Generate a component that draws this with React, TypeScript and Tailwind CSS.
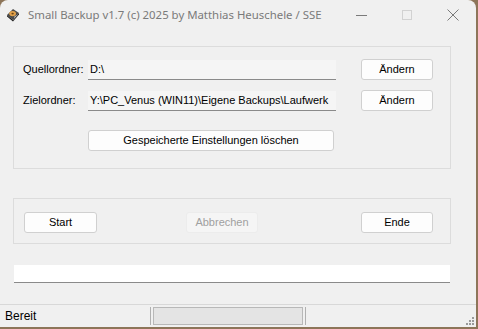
import React from 'react'

const BTN =
  'flex h-[21px] items-center justify-center rounded-[3px] border border-[#d0d0d0] bg-[#fdfdfd] text-[11px] text-black'

function Field({ value }: { value: string }) {
  return (
    <div className="flex h-[20px] w-[248px] items-center overflow-hidden whitespace-nowrap border-b border-[#8a8a8a] bg-[#f5f5f5] pl-[2px] text-[11px] text-black">
      {value}
    </div>
  )
}

function DriveIcon() {
  return (
    <svg width="14" height="14" viewBox="0 0 14 14">
      {/* tilted drive body */}
      <path d="M1 7 L7 1 L13 5 L7 12 Z" fill="#4a4a4a" />
      <path d="M1 7 L7 12 L7 13.5 L1 8.5 Z" fill="#1e1e1e" />
      <path d="M7 12 L13 5 L13 6.5 L7 13.5 Z" fill="#2e2e2e" />
      {/* platter */}
      <ellipse cx="6.6" cy="5.6" rx="3.4" ry="2.6" fill="#e0a04a" />
      <ellipse cx="6.6" cy="5.6" rx="1.2" ry="0.9" fill="#6b4415" />
      <path d="M8 9.5 L10.5 7.5" stroke="#d0d0d0" strokeWidth="1" />
    </svg>
  )
}

export default function App() {
  return (
    <div className="h-[329px] w-[478px] bg-[#8d7559]" style={{ fontFamily: '"Liberation Sans", Arial, sans-serif' }}>
      <div className="flex h-[327px] w-[476px] flex-col overflow-hidden rounded-t-[8px] bg-[#f0f0f0]">
        {/* Title bar */}
        <div className="flex h-[30px] shrink-0 items-center">
          <div className="ml-[6px] mr-[8px] flex h-[14px] w-[14px] items-center justify-center">
            <DriveIcon />
          </div>
          <span className="text-[11.4px] text-[#7a7a7a]" style={{ fontFamily: '"Noto Sans", "Open Sans", sans-serif' }}>
            Small Backup v1.7 (c) 2025 by Matthias Heuschele / SSE
          </span>
          <div className="ml-auto flex items-center">
            <div className="flex w-[46px] justify-center">
              <div className="h-px w-[11px] bg-[#7a7a7a]" />
            </div>
            <div className="flex w-[46px] justify-center">
              <div className="h-[10px] w-[10px] border border-[#d2d2d2]" />
            </div>
            <div className="flex w-[46px] justify-center">
              <svg width="12" height="12" viewBox="0 0 12 12">
                <path d="M0.5 0.5 L11.5 11.5 M11.5 0.5 L0.5 11.5" stroke="#7a7a7a" strokeWidth="1" />
              </svg>
            </div>
          </div>
        </div>

        {/* Folders group */}
        <div className="ml-[13px] mt-[16px] h-[123px] w-[438px] border border-[#dcdcdc] pl-[9px] pt-[12px]">
          <div className="flex h-[21px] items-center">
            <span className="w-[65px] text-[11px] text-black">Quellordner:</span>
            <Field value="D:\" />
            <div className={`${BTN} ml-[25px] w-[72px]`}>Ändern</div>
          </div>
          <div className="mt-[10px] flex h-[21px] items-center">
            <span className="w-[65px] text-[11px] text-black">Zielordner:</span>
            <Field value="Y:\PC_Venus (WIN11)\Eigene Backups\Laufwerk" />
            <div className={`${BTN} ml-[25px] w-[72px]`}>Ändern</div>
          </div>
          <div className={`${BTN} ml-[65px] mt-[19px] w-[246px]`}>Gespeicherte Einstellungen löschen</div>
        </div>

        {/* Actions group */}
        <div className="ml-[13px] mt-[29px] flex h-[46px] w-[438px] items-start border border-[#dcdcdc] pl-[10px] pt-[13px]">
          <div className={`${BTN} w-[73px]`}>Start</div>
          <div className="ml-[89px] flex h-[21px] w-[72px] items-center justify-center rounded-[3px] border border-[#ececec] bg-[#f5f5f5] text-[11px] text-[#a0a0a0]">
            Abbrechen
          </div>
          <div className={`${BTN} ml-[103px] w-[72px]`}>Ende</div>
        </div>

        {/* Progress bar */}
        <div className="ml-[14px] mt-[21px] h-[18px] w-[436px] border-b border-[#8a8a8a] bg-white" />

        {/* Status bar */}
        <div className="mt-auto flex h-[23px] items-center border-t border-[#d8d8d8]">
          <span className="ml-[5px] w-[145px] text-[12px] text-black">Bereit</span>
          <div className="flex h-[18px] items-stretch">
            <div className="w-px bg-[#b0b0b0]" />
            <div className="ml-[2px] w-[150px] border border-[#b8b8b8] bg-[#e4e4e4]" />
            <div className="ml-[2px] w-px bg-[#b0b0b0]" />
          </div>
          <div className="mb-[2px] ml-auto mr-[2px] grid grid-cols-3 gap-[1px] self-end">
            <span className="h-[2px] w-[2px]" />
            <span className="h-[2px] w-[2px]" />
            <span className="h-[2px] w-[2px] bg-[#9a9a9a]" />
            <span className="h-[2px] w-[2px]" />
            <span className="h-[2px] w-[2px] bg-[#9a9a9a]" />
            <span className="h-[2px] w-[2px] bg-[#9a9a9a]" />
            <span className="h-[2px] w-[2px] bg-[#9a9a9a]" />
            <span className="h-[2px] w-[2px] bg-[#9a9a9a]" />
            <span className="h-[2px] w-[2px] bg-[#9a9a9a]" />
          </div>
        </div>
      </div>
    </div>
  )
}
